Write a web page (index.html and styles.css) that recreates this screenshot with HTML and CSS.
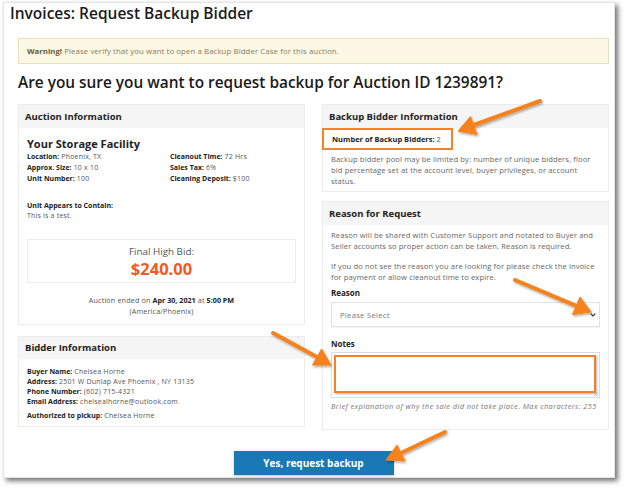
FILE: index.html
```html
<!DOCTYPE html>
<html>
<head>
<meta charset="utf-8">
<link rel="stylesheet" href="styles.css">
</head>
<body>
<div class="frame">
  <h1 class="title">Invoices: Request Backup Bidder</h1>
  <div class="warning"><b>Warning!</b> Please verify that you want to open a Backup Bidder Case for this auction.</div>
  <h2 class="question">Are you sure you want to request backup for Auction ID 1239891?</h2>
  <div class="grid">
    <div class="col">
      <div class="card auction">
        <div class="card-head">Auction Information</div>
        <div class="card-body">
          <div class="facility">Your Storage Facility</div>
          <div class="details">
            <div><b>Location:</b> Phoenix, TX</div>
            <div><b>Cleanout Time:</b> 72 Hrs</div>
            <div><b>Approx. Size:</b> 10 x 10</div>
            <div><b>Sales Tax:</b> 6%</div>
            <div><b>Unit Number:</b> 100</div>
            <div><b>Cleaning Deposit:</b> $100</div>
          </div>
          <div class="contains"><b>Unit Appears to Contain:</b><br>This is a test.</div>
          <div class="bid-box">
            <div class="bid-label">Final High Bid:</div>
            <div class="bid-value">$240.00</div>
          </div>
          <div class="ended">Auction ended on <b>Apr 30, 2021</b> at <b>5:00 PM</b><br>(America/Phoenix)</div>
        </div>
      </div>
      <div class="card bidder">
        <div class="card-head">Bidder Information</div>
        <div class="card-body">
          <div class="rows">
            <div><b>Buyer Name:</b> Chelsea Horne</div>
            <div><b>Address:</b> 2501 W Dunlap Ave Phoenix , NY 13135</div>
            <div><b>Phone Number:</b> (602) 715-4321</div>
            <div><b>Email Address:</b> chelsealhorne@outlook.com</div>
          </div>
          <div class="pickup"><b>Authorized to pickup:</b> Chelsea Horne</div>
        </div>
      </div>
    </div>
    <div class="col">
      <div class="card backup">
        <div class="card-head">Backup Bidder Information</div>
        <div class="hl"><b>Number of Backup Bidders:</b> 2</div>
        <p class="text pool">Backup bidder pool may be limited by: number of unique bidders, floor bid percentage set at the account level, buyer privileges, or account status.</p>
      </div>
      <div class="card reason">
        <div class="card-head">Reason for Request</div>
        <div class="card-body">
          <p class="text">Reason will be shared with Customer Support and notated to Buyer and Seller accounts so proper action can be taken. Reason is required.</p>
          <p class="text second">If you do not see the reason you are looking for please check the invoice for payment or allow cleanout time to expire.</p>
          <div class="label">Reason</div>
          <div class="select"><span>Please Select</span>
            <svg class="chev" width="6" height="4" viewBox="0 0 6 4"><polyline points="0.7,0.7 3,3 5.3,0.7" fill="none" stroke="#333" stroke-width="1.2"/></svg>
          </div>
          <div class="label notes-label">Notes</div>
          <div class="textarea"><div class="textarea-inner"></div>
            <svg class="grip" width="5" height="5" viewBox="0 0 5 5"><path d="M1 5 L5 1 M3 5 L5 3" stroke="#aaa" stroke-width="0.7"/></svg>
          </div>
          <div class="help">Brief explanation of why the sale did not take place. Max characters: 255</div>
        </div>
      </div>
    </div>
  </div>
  <div class="actions"><button class="btn">Yes, request backup</button></div>
</div>
<svg class="arrows" width="624" height="488" viewBox="0 0 624 488">
  <defs>
    <filter id="sh" x="-20%" y="-20%" width="140%" height="140%">
      <feDropShadow dx="1" dy="1.5" stdDeviation="1.2" flood-color="#000" flood-opacity="0.35"/>
    </filter>
  </defs>
  <g fill="#f7821f" stroke="#f7821f" filter="url(#sh)">
    <line x1="540" y1="101" x2="474" y2="125" stroke-width="4" stroke-linecap="round"/>
    <polygon points="458,131 477,134.5 470.5,116.5" stroke-width="1"/>
    <line x1="515" y1="280" x2="575" y2="305.3" stroke-width="4" stroke-linecap="round"/>
    <polygon points="591,312 580,297 572.5,314.5" stroke-width="1"/>
    <line x1="273" y1="333" x2="316" y2="356.5" stroke-width="4" stroke-linecap="round"/>
    <polygon points="331,365 321.5,349 312.5,365" stroke-width="1"/>
    <line x1="445" y1="432" x2="401" y2="453" stroke-width="4" stroke-linecap="round"/>
    <polygon points="386,460 405,461 397,445" stroke-width="1"/>
  </g>
</svg>
</body>
</html>
```

FILE: styles.css
```css
* { box-sizing: border-box; }
html, body { margin: 0; padding: 0; background: #fff; }
body {
  font-family: "Open Sans", "DejaVu Sans", sans-serif;
  color: #555;
  width: 624px;
  height: 488px;
  position: relative;
  overflow: hidden;
}
b { color: #222; font-weight: 700; letter-spacing: 0; }
.frame {
  margin: 2px 0 0 3px;
  width: 612px;
  height: 476px;
  border: 1px solid #e4e4e4;
  background: #fff;
  box-shadow: 3px 3px 5px rgba(0,0,0,0.55);
  padding: 0 5px 0 14px;
}
.title {
  margin: 0 0 0 -8px;
  font-size: 15.5px;
  line-height: 20px;
  font-weight: 600;
  color: #1a1a1a;
}
.warning {
  margin-top: 15px;
  height: 26px;
  background: #fcf8e4;
  border: 1px solid #e9dfba;
  font-size: 7.8px;
  letter-spacing: 0.1px;
  line-height: 24px;
  padding-left: 8px;
  color: #8a7b5c;
}
.warning b { color: #6a5a3c; }
.question {
  margin: 7px 0 0 0;
  font-size: 15.4px;
  line-height: 24px;
  font-weight: 600;
  color: #1a1a1a;
}
.grid {
  margin-top: 9px;
  display: grid;
  grid-template-columns: 287px 287px;
  column-gap: 17px;
}
.col { display: flex; flex-direction: column; }
.card {
  border: 1px solid #ececec;
  background: #fff;
}
.card-head {
  height: 23px;
  background: #f5f5f5;
  font-size: 9.5px;
  font-weight: 700;
  line-height: 23px;
  padding-left: 6px;
  color: #222;
}
.card-body { padding: 0 8px 0 8px; }
.auction { height: 221px; }
.auction .card-body { padding-top: 9px; }
.facility {
  font-size: 11px;
  line-height: 14px;
  font-weight: 700;
  color: #222;
}
.details {
  display: grid;
  grid-template-columns: 143px 1fr;
  font-size: 7px;
  line-height: 11px;
  letter-spacing: 0.2px;
}
.contains {
  margin-top: 17px;
  font-size: 7px;
  line-height: 10px;
  letter-spacing: 0.2px;
}
.bid-box {
  margin-top: 18px;
  height: 44px;
  border: 1px solid #ececec;
  text-align: center;
  padding-top: 5px;
}
.bid-label {
  font-size: 9.8px;
  line-height: 13px;
  color: #555;
}
.bid-value {
  font-size: 16.5px;
  line-height: 22px;
  font-weight: 700;
  color: #f15a24;
}
.ended {
  margin-top: 12px;
  text-align: center;
  font-size: 7.2px;
  line-height: 11px;
  letter-spacing: 0.15px;
}
.bidder { margin-top: 11px; height: 91px; }
.bidder .card-head { height: 22px; line-height: 22px; }
.bidder .card-body { padding-top: 8px; }
.rows { font-size: 7px; line-height: 10px; letter-spacing: 0.2px; }
.pickup { margin-top: 4px; font-size: 7px; line-height: 10px; letter-spacing: 0.2px; }
.backup { height: 88px; }
.hl {
  width: 131px;
  height: 22px;
  margin-left: -1px;
  border: 2px solid #f5822a;
  font-size: 7.5px;
  line-height: 18px;
  padding-left: 8px;
}
.text {
  margin: 0;
  font-size: 7.6px;
  letter-spacing: 0.12px;
  line-height: 11px;
  color: #666;
}
.pool { padding: 4px 8px 0 8px; }
.reason { margin-top: 9px; height: 229px; }
.reason .card-body { padding-top: 5px; }
.second { margin-top: 9px; }
.label {
  margin-top: 4px;
  font-size: 8px;
  line-height: 12px;
  font-weight: 700;
  color: #222;
}
.select {
  margin-top: 3px;
  height: 25px;
  border: 1px solid #e2e2e2;
  display: flex;
  align-items: center;
  justify-content: space-between;
  padding: 0 3px 0 8px;
  font-size: 7.6px;
  letter-spacing: 0.3px;
  color: #777;
  box-shadow: 0 1px 1px rgba(0,0,0,0.04);
}
.notes-label { margin-top: 11px; }
.textarea {
  position: relative;
  margin-top: 2px;
  height: 46px;
  border: 1px solid #ddd;
  padding: 2px 3px 4px 2px;
}
.textarea-inner {
  height: 100%;
  border: 2px solid #f5822a;
  box-shadow: 1px 1px 2px rgba(0,0,0,0.3);
}
.grip { position: absolute; right: 1px; bottom: 1px; }
.help {
  margin-top: 2px;
  font-size: 7.4px;
  letter-spacing: 0.4px;
  line-height: 12px;
  font-style: italic;
  color: #777;
  white-space: nowrap;
}
.actions {
  margin-top: 21px;
  display: flex;
  justify-content: center;
}
.btn {
  width: 160px;
  height: 24px;
  border: 0;
  background: #1979b6;
  color: #fff;
  font-family: "Open Sans", "DejaVu Sans", sans-serif;
  font-size: 10px;
  font-weight: 700;
  box-shadow: 0 1px 2px rgba(0,0,0,0.25);
}
.arrows { position: absolute; left: 0; top: 0; pointer-events: none; }
```
